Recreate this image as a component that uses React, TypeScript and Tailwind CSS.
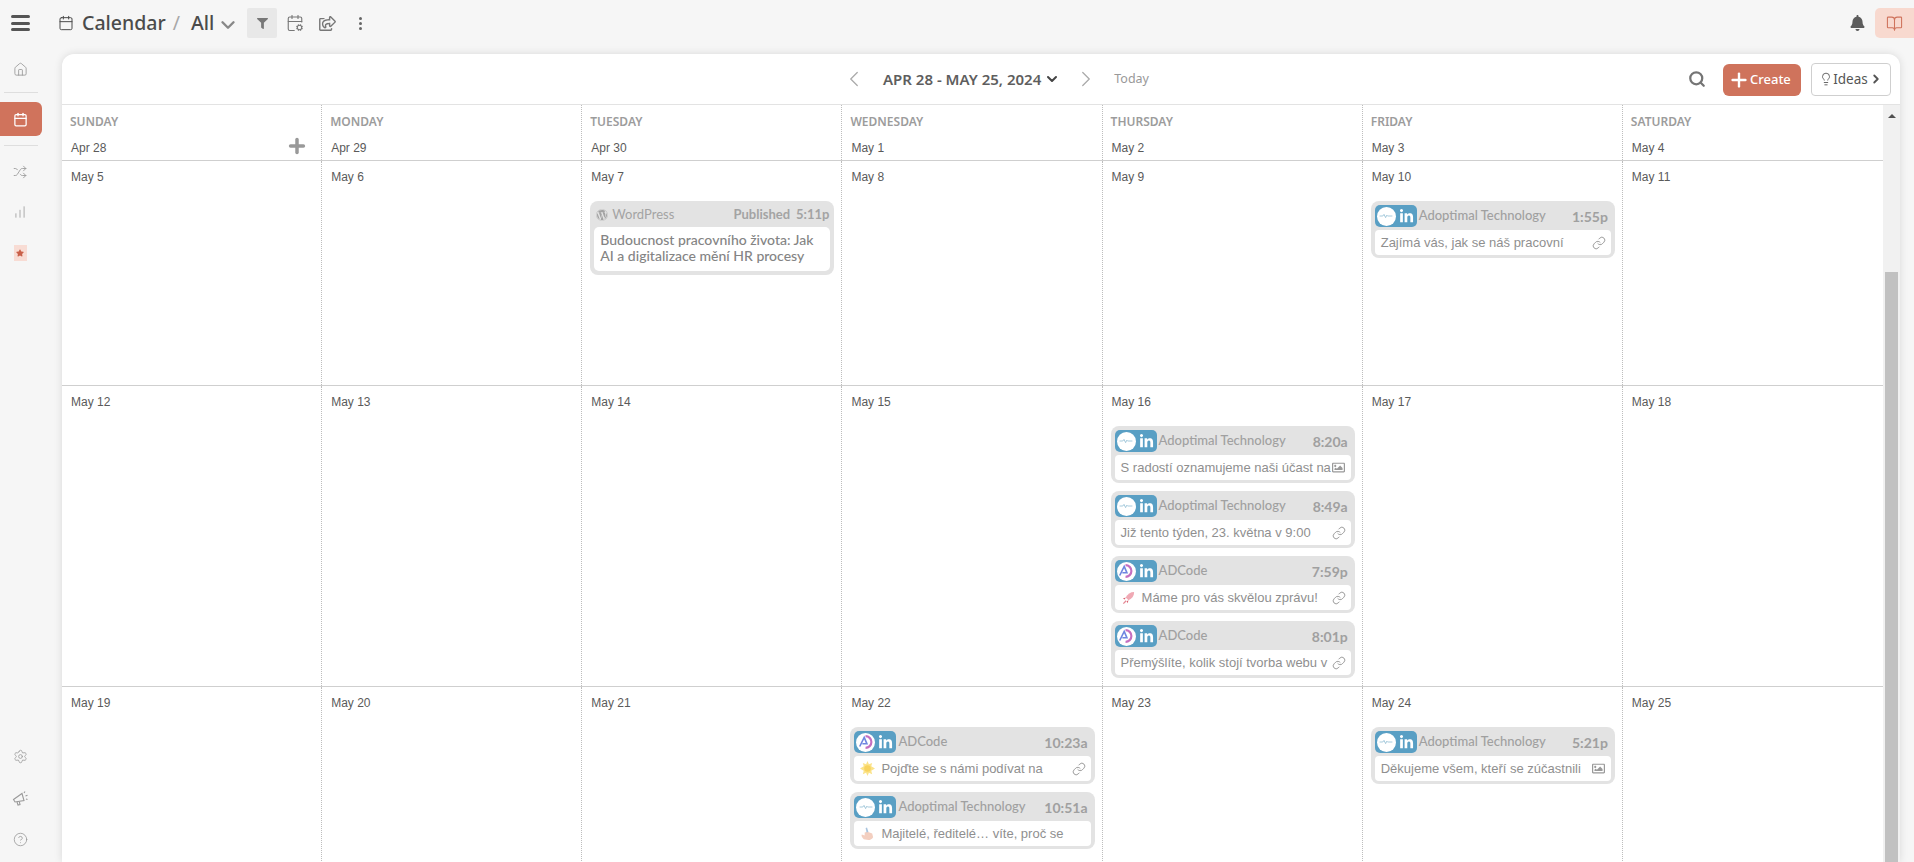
import React from 'react';
import {
  BookOpen, Calendar, CalendarCog, ChartNoAxesColumnIncreasing, ChevronDown, ChevronLeft, ChevronRight,
  CircleHelp, House, Lightbulb, Link, Plus, Search, Settings, Shuffle,
} from 'lucide-react';
import { FaBell, FaFilter, FaLinkedinIn, FaRegImage, FaRegShareSquare, FaStar, FaWordpress } from 'react-icons/fa';

type Post = {
  account: 'adoptimal' | 'adcode';
  time: string;
  text: string;
  media: 'link' | 'image' | 'none';
  emoji?: 'rocket' | 'sun' | 'hand';
};

const days = [
  { name: 'SUNDAY', date: 'Apr 28' },
  { name: 'MONDAY', date: 'Apr 29' },
  { name: 'TUESDAY', date: 'Apr 30' },
  { name: 'WEDNESDAY', date: 'May 1' },
  { name: 'THURSDAY', date: 'May 2' },
  { name: 'FRIDAY', date: 'May 3' },
  { name: 'SATURDAY', date: 'May 4' },
];

const weeks: { h: string; cells: { date: string; wp?: boolean; posts?: Post[] }[] }[] = [
  {
    h: 'h-[225px]',
    cells: [
      { date: 'May 5' },
      { date: 'May 6' },
      { date: 'May 7', wp: true },
      { date: 'May 8' },
      { date: 'May 9' },
      { date: 'May 10', posts: [{ account: 'adoptimal', time: '1:55p', text: 'Zajímá vás, jak se náš pracovní', media: 'link' }] },
      { date: 'May 11' },
    ],
  },
  {
    h: 'h-[301px]',
    cells: [
      { date: 'May 12' },
      { date: 'May 13' },
      { date: 'May 14' },
      { date: 'May 15' },
      {
        date: 'May 16',
        posts: [
          { account: 'adoptimal', time: '8:20a', text: 'S radostí oznamujeme naši účast na', media: 'image' },
          { account: 'adoptimal', time: '8:49a', text: 'Již tento týden, 23. května v 9:00', media: 'link' },
          { account: 'adcode', time: '7:59p', text: 'Máme pro vás skvělou zprávu!', media: 'link', emoji: 'rocket' },
          { account: 'adcode', time: '8:01p', text: 'Přemýšlíte, kolik stojí tvorba webu v', media: 'link' },
        ],
      },
      { date: 'May 17' },
      { date: 'May 18' },
    ],
  },
  {
    h: 'h-[301px]',
    cells: [
      { date: 'May 19' },
      { date: 'May 20' },
      { date: 'May 21' },
      {
        date: 'May 22',
        posts: [
          { account: 'adcode', time: '10:23a', text: 'Pojďte se s námi podívat na', media: 'link', emoji: 'sun' },
          { account: 'adoptimal', time: '10:51a', text: 'Majitelé, ředitelé… víte, proč se', media: 'none', emoji: 'hand' },
        ],
      },
      { date: 'May 23' },
      { date: 'May 24', posts: [{ account: 'adoptimal', time: '5:21p', text: 'Děkujeme všem, kteří se zúčastnili', media: 'image' }] },
      { date: 'May 25' },
    ],
  },
];

const Avatar = ({ account }: { account: Post['account'] }) => (
  <span className="w-[19px] h-[19px] rounded-full bg-white flex items-center justify-center shrink-0">
    {account === 'adoptimal' ? (
      <svg viewBox="0 0 20 20" className="w-[16px] h-[16px]">
        <path d="M2 10h4l1.5-2 2 4 1.5-3 1 1h6" fill="none" stroke="#8fbdd3" strokeWidth="1" />
      </svg>
    ) : (
      <svg viewBox="0 0 20 20" className="w-[18px] h-[18px]">
        <path d="M9.5 3.5a6.5 6.5 0 1 1 0 13" fill="none" stroke="#c46fc0" strokeWidth="2.4" />
        <path d="M3 15 L8 5 L11 12 L6 12" fill="none" stroke="#6f86e0" strokeWidth="1.8" />
      </svg>
    )}
  </span>
);

const Badge = ({ account }: { account: Post['account'] }) => (
  <span className="w-[42px] h-[22px] rounded-[5px] bg-[#599fc4] flex items-center pl-[2px] gap-[3px] shrink-0">
    <Avatar account={account} />
    <FaLinkedinIn className="w-[15px] h-[15px] text-white" />
  </span>
);

const Emoji = ({ kind }: { kind: NonNullable<Post['emoji']> }) => (
  <svg viewBox="0 0 16 16" className="w-[15px] h-[15px] mr-[6px] shrink-0">
    {kind === 'rocket' && (
      <>
        <path d="M14 2c-4 0-7 2-9 6l3 3c4-2 6-5 6-9z" fill="#f0a9b4" />
        <path d="M5 8l-3 1 2 1zM8 11l-1 3-1-2z" fill="#d9606f" />
        <path d="M2 14l3-3 1 1-3 3z" fill="#e58a96" />
      </>
    )}
    {kind === 'sun' && (
      <>
        <path d="M8 0l1.5 3.5L13 2l-1 3.5L16 8l-4 2.5 1 3.5-3.5-1.5L8 16l-1.5-3.5L3 14l1-3.5L0 8l4-2.5L3 2l3.5 1.5z" fill="#fbe38a" />
        <circle cx="8" cy="8" r="3.5" fill="#f8d35e" />
      </>
    )}
    {kind === 'hand' && (
      <>
        <path d="M4 14c-2-2-3-4-2-5l3 1V7l3-1 5 2 1 4c-1 2-3 3-5 3z" fill="#f3cfc0" />
        <path d="M7 7l-1-5 1.5-.5 1.5 5z" fill="#a9c4de" />
      </>
    )}
  </svg>
);

const PostCard = ({ post }: { post: Post }) => (
  <div className="bg-[#e3e3e3] rounded-[8px] pt-[4px] px-[4px] pb-[3px]">
    <div className="flex items-center h-[22px] font-['Lato',sans-serif] text-[13px] font-medium text-[#a0a0a0]">
      <Badge account={post.account} />
      <span className="ml-[2px]">{post.account === 'adoptimal' ? 'Adoptimal Technology' : 'ADCode'}</span>
      <span className="ml-auto mr-[3px] text-[14px] font-bold text-[#a0a0a0]">{post.time}</span>
    </div>
    <div className="mt-[3px] h-[25px] bg-white rounded-[4px] flex items-center pl-[6px] pr-[5px] text-[13px] text-[#8f8f8f] whitespace-nowrap">
      {post.emoji && <Emoji kind={post.emoji} />}
      <span>{post.text}</span>
      {post.media === 'link' && <Link className="w-[14px] h-[14px] ml-auto shrink-0 text-[#9c9c9c]" strokeWidth={1.7} />}
      {post.media === 'image' && <FaRegImage className="w-[15px] h-[13px] ml-auto shrink-0 text-[#999]" />}
    </div>
  </div>
);

const WordPressCard = () => (
  <div className="bg-[#e3e3e3] rounded-[8px] p-[4px]">
    <div className="flex items-center h-[22px] pb-[3px] pl-[2px] pr-[1px] font-['Lato',sans-serif] text-[13px] text-[#a3a3a3]">
      <FaWordpress className="w-[12px] h-[12px] mr-[4px]" />
      <span>WordPress</span>
      <span className="ml-auto font-bold">Published</span>
      <span className="ml-[6px] font-bold">5:11p</span>
    </div>
    <div className="bg-white rounded-[5px] h-[44px] px-[6px] py-[5px] font-['Lato',sans-serif] text-[14px] leading-[16px] font-medium text-[#848484]">
      Budoucnost pracovního života: Jak AI a digitalizace mění HR procesy
    </div>
  </div>
);

const SideIcon = ({ children, className }: { children: React.ReactNode; className: string }) => (
  <div className={`flex justify-center w-[40px] text-[#9a9a9a] ${className}`}>{children}</div>
);

const Sidebar = () => (
  <aside className="w-[62px] shrink-0 flex flex-col pt-[8px]">
    <SideIcon className="h-[16px]"><House className="w-[15px] h-[15px]" strokeWidth={1.4} /></SideIcon>
    <div className="w-[34px] ml-[4px] mt-[14px] border-t border-[#dedede]" />
    <div className="mt-[9px] w-[42px] h-[34px] rounded-r-[6px] bg-[#d0735c] flex items-center justify-center pr-[1px]">
      <Calendar className="w-[15px] h-[15px] text-white" strokeWidth={2} />
    </div>
    <div className="w-[34px] ml-[4px] mt-[9px] border-t border-[#dedede]" />
    <SideIcon className="mt-[19px] h-[14px]"><Shuffle className="w-[14px] h-[14px]" strokeWidth={1.5} /></SideIcon>
    <SideIcon className="mt-[26px] h-[14px]"><ChartNoAxesColumnIncreasing className="w-[14px] h-[14px]" strokeWidth={1.4} /></SideIcon>
    <SideIcon className="mt-[26px] h-[16px]">
      <span className="w-[13px] h-[16px] bg-[#f8dcd4] flex items-center justify-center">
        <FaStar className="w-[8px] h-[8px] text-[#c9604a]" />
      </span>
    </SideIcon>
    <SideIcon className="mt-[488px] h-[16px]"><Settings className="w-[15px] h-[15px]" strokeWidth={1.3} /></SideIcon>
    <SideIcon className="mt-[25px] h-[16px]">
      <svg viewBox="0 0 16 16" className="w-[16px] h-[16px]" fill="none" stroke="currentColor" strokeWidth="1.1">
        <path d="M1.5 9.5 10 3.5l2 7-9 1.500z" />
        <path d="M5 12l1 3 2-.5-.7-2.800" />
        <path d="M12 3l1-1.500M13.500 6l2-.7M14 9l1.500.5" />
      </svg>
    </SideIcon>
    <SideIcon className="mt-[26px] h-[16px]"><CircleHelp className="w-[15px] h-[15px]" strokeWidth={1.3} /></SideIcon>
  </aside>
);

const TopBar = () => (
  <header className="h-[54px] shrink-0 flex items-center pb-[8px] font-['Noto_Sans',sans-serif] text-[#4b4b4b]">
    <div className="ml-[11px] w-[19px] flex flex-col gap-[3.5px]">
      <span className="h-[3px] rounded-full bg-[#555]" />
      <span className="h-[3px] rounded-full bg-[#555]" />
      <span className="h-[3px] rounded-full bg-[#555]" />
    </div>
    <Calendar className="ml-[28px] w-[16px] h-[16px]" strokeWidth={1.5} />
    <span className="ml-[8px] text-[19.5px] font-medium">Calendar</span>
    <span className="ml-[7px] text-[19.5px] text-[#a8a8a8]">/</span>
    <span className="ml-[11px] text-[19.5px] font-medium">All</span>
    <ChevronDown className="ml-[3px] mt-[3px] w-[22px] h-[22px] text-[#888]" strokeWidth={2.6} />
    <button className="ml-[8px] w-[30px] h-[30px] rounded-[2px] bg-[#e8e8e8] flex items-center justify-center text-[#777]">
      <FaFilter className="w-[11px] h-[11px]" />
    </button>
    <CalendarCog className="ml-[9px] w-[18px] h-[18px] text-[#777]" strokeWidth={1.5} />
    <FaRegShareSquare className="ml-[15px] w-[17px] h-[15px] text-[#777]" />
    <span className="ml-[23px] flex flex-col gap-[2px]">
      <span className="w-[3px] h-[3px] rounded-full bg-[#666]" />
      <span className="w-[3px] h-[3px] rounded-full bg-[#666]" />
      <span className="w-[3px] h-[3px] rounded-full bg-[#666]" />
    </span>
    <FaBell className="ml-auto w-[15px] h-[16px] text-[#5c5c5c]" />
    <button className="ml-[10px] w-[39px] h-[30px] rounded-l-[5px] bg-[#f8d9cf] flex items-center justify-center text-[#cf735c]">
      <BookOpen className="w-[17px] h-[17px]" strokeWidth={1.5} />
    </button>
  </header>
);

const Toolbar = () => (
  <div className="h-[51px] shrink-0 flex items-center border-b border-[#e3e3e3] font-['Noto_Sans',sans-serif]">
    <ChevronLeft className="ml-[779px] w-[26px] h-[26px] text-[#aaa]" strokeWidth={1.2} />
    <span className="ml-[16px] text-[15px] font-semibold text-[#5e5e5e] whitespace-nowrap">APR 28 - MAY 25, 2024</span>
    <ChevronDown className="ml-[3px] w-[16px] h-[16px] text-[#444]" strokeWidth={3} />
    <ChevronRight className="ml-[13px] w-[26px] h-[26px] text-[#aaa]" strokeWidth={1.2} />
    <span className="ml-[15px] text-[12.5px] text-[#999]">Today</span>
    <Search className="ml-auto w-[18px] h-[18px] text-[#757575]" strokeWidth={3} />
    <button className="ml-[17px] mt-[2px] w-[78px] h-[32px] rounded-[6px] bg-[#cf735c] flex items-center pl-[5px] text-white text-[13px] font-medium">
      <Plus className="w-[22px] h-[22px]" strokeWidth={2.6} />Create
    </button>
    <button className="ml-[10px] mr-[9px] w-[80px] h-[33px] rounded-[4px] border border-[#cfcfcf] bg-white flex items-center justify-center text-[#555] text-[13.5px]">
      <Lightbulb className="w-[14px] h-[14px]" strokeWidth={1.5} />Ideas
      <ChevronRight className="w-[14px] h-[14px] ml-[1px]" strokeWidth={3.2} />
    </button>
  </div>
);

const Scrollbar = () => (
  <div className="w-[17px] shrink-0 bg-[#f1f1f1] flex flex-col items-center">
    <span className="mt-[9px] w-0 h-0 border-x-[4px] border-x-transparent border-b-[4px] border-b-[#505050]" />
    <span className="mt-[154px] w-[13px] flex-1 bg-[#c1c1c1]" />
  </div>
);

export default function App() {
  return (
    <div className="w-[1914px] h-[862px] bg-[#f6f6f6] flex flex-col overflow-hidden font-['Liberation_Sans',sans-serif]">
      <TopBar />
      <div className="flex flex-1 min-h-0">
        <Sidebar />
        <main className="w-[1838px] bg-white rounded-t-[12px] shadow-[0_0_8px_rgba(0,0,0,0.12)] flex flex-col overflow-hidden">
          <Toolbar />
          <div className="flex flex-1 min-h-0">
            <div className="w-[1821px] overflow-hidden">
              <div className="grid grid-cols-7 h-[56px] border-b border-[#cfcfcf]">
                {days.map((d, i) => (
                  <div key={d.name} className={`relative pl-[8px] ${i < 6 ? 'border-r border-dotted border-[#bdbdbd]' : ''}`}>
                    <div className="mt-[8px] font-['Noto_Sans',sans-serif] text-[12px] font-semibold leading-[18px] text-[#9c9c9c]">{d.name}</div>
                    <div className="mt-[10px] pl-[1px] text-[12px] leading-[14px] text-[#5a5a5a]">{d.date}</div>
                    {i === 0 && <Plus className="absolute right-[13px] top-[30px] w-[22px] h-[22px] text-[#999]" strokeWidth={3.8} />}
                  </div>
                ))}
              </div>
              {weeks.map((w, k) => (
                <div key={k} className={`grid grid-cols-7 ${w.h} border-b border-[#cfcfcf]`}>
                  {w.cells.map((c, i) => (
                    <div key={c.date} className={`pl-[8px] pr-[7px] pt-[9px] ${i < 6 ? 'border-r border-dotted border-[#bdbdbd]' : ''}`}>
                      <div className="h-[14px] pl-[1px] text-[12px] leading-[14px] text-[#5a5a5a]">{c.date}</div>
                      <div className="mt-[17px] flex flex-col gap-[8px]">
                        {c.wp && <WordPressCard />}
                        {c.posts?.map((p) => <PostCard key={p.time} post={p} />)}
                      </div>
                    </div>
                  ))}
                </div>
              ))}
            </div>
            <Scrollbar />
          </div>
        </main>
      </div>
    </div>
  );
}
